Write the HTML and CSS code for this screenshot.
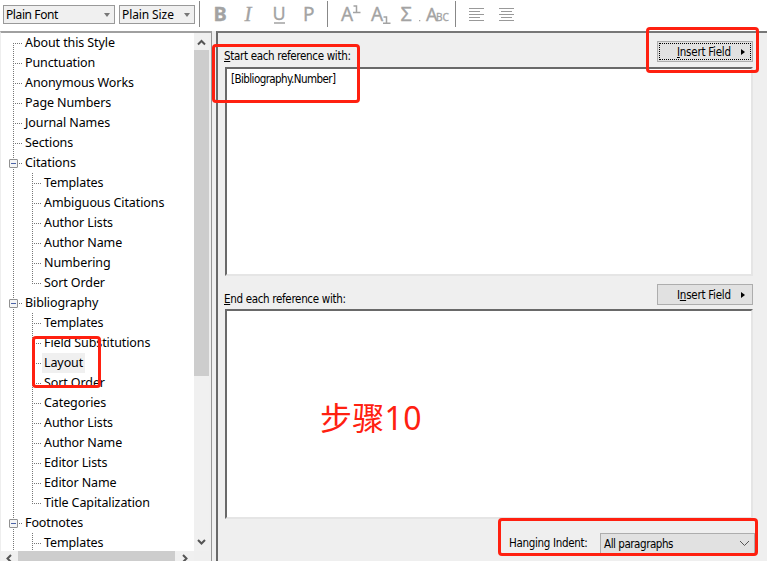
FILE: index.html
```html
<!DOCTYPE html>
<html lang="en">
<head>
<meta charset="utf-8">
<title>Style editor</title>
<link rel="stylesheet" href="styles.css">
</head>
<body>
<header class="toolbar">
  <div class="combo font">Plain Font<i class="down"></i></div>
  <div class="combo size">Plain Size<i class="down"></i></div>
  <svg class="tools" width="330" height="31" viewBox="196 0 330 31">
    <path class="sep" d="M199.5 1V27M327.5 1V27M455.5 1V27"/>
    <g class="glyphs">
      <text x="213.500" y="21" font-size="20" font-weight="700" textLength="13">B</text>
      <text x="244.500" y="21" class="serif">I</text>
      <text x="272.500" y="20" font-size="18" textLength="13">U</text>
      <text x="303" y="21" font-size="19">P</text>
      <text x="341" y="21" font-size="19">A</text>
      <text x="371" y="21" font-size="19">A</text>
      <text x="400.500" y="21" font-size="20" textLength="13">Σ</text>
      <text x="426" y="21" font-size="18" textLength="11">A</text>
      <text x="436" y="21" font-size="10.500" textLength="13" lengthAdjust="spacingAndGlyphs">BC</text>
    </g>
    <path class="stroke" d="M274 23h11M353.500 6h3v6M353 12.500h7.500M383.500 17h3v6M383 23.200h7.500"/>
    <path class="dot" d="M419 20h1.300v1.300h-1.300z"/>
    <path class="lines" d="M469 8.500h15M469 11.500h11M469 14.500h15M469 17.500h11M469 20.500h15M499 8.500h15M501 11.500h11M499 14.500h15M501 17.500h11M499 20.500h15"/>
  </svg>
</header>
<main class="main">
  <aside class="side">
    <div class="upper">
      <ul class="tree">
        <li class="row first"><span>About this Style</span></li>
        <li class="row"><span>Punctuation</span></li>
        <li class="row"><span>Anonymous Works</span></li>
        <li class="row"><span>Page Numbers</span></li>
        <li class="row"><span>Journal Names</span></li>
        <li class="row"><span>Sections</span></li>
        <li class="row group"><i class="toggle"></i><span>Citations</span></li>
        <li class="row child"><span>Templates</span></li>
        <li class="row child"><span>Ambiguous Citations</span></li>
        <li class="row child"><span>Author Lists</span></li>
        <li class="row child"><span>Author Name</span></li>
        <li class="row child"><span>Numbering</span></li>
        <li class="row child last"><span>Sort Order</span></li>
        <li class="row group"><i class="toggle"></i><span>Bibliography</span></li>
        <li class="row child"><span>Templates</span></li>
        <li class="row child"><span>Field Substitutions</span></li>
        <li class="row child"><span class="selected">Layout</span></li>
        <li class="row child"><span>Sort Order</span></li>
        <li class="row child"><span>Categories</span></li>
        <li class="row child"><span>Author Lists</span></li>
        <li class="row child"><span>Author Name</span></li>
        <li class="row child"><span>Editor Lists</span></li>
        <li class="row child"><span>Editor Name</span></li>
        <li class="row child last"><span>Title Capitalization</span></li>
        <li class="row group"><i class="toggle"></i><span>Footnotes</span></li>
        <li class="row child"><span>Templates</span></li>
      </ul>
      <div class="vscroll">
        <svg width="15" height="17"><path class="chev" d="M4 11.500l3.500-3.500 3.500 3.500"/></svg>
        <div class="vthumb"></div>
        <svg width="15" height="17"><path class="chev" d="M4 6l3.500 3.500L11 6"/></svg>
      </div>
    </div>
    <div class="hscroll">
      <svg width="17" height="10"><path class="chev" d="M10 4L6.500 7.500 10 11"/></svg>
      <div class="hthumb"></div>
      <svg width="19" height="10"><path class="chev" d="M8 4l3.500 3.500L8 11"/></svg>
    </div>
  </aside>
  <section class="pane">
    <div class="head one">
      <label><u>S</u>tart each reference with:</label>
      <button class="insert focus"><span><u>I</u>nsert Field</span><i class="right"></i></button>
    </div>
    <div class="field"><span class="value">[Bibliography.Number]</span></div>
    <div class="head two">
      <label><u>E</u>nd each reference with:</label>
      <button class="insert"><span>I<u>n</u>sert Field</span><i class="right"></i></button>
    </div>
    <div class="field second"></div>
    <div class="indent">
      <label class="hang">Hanging Indent:</label>
      <div class="select"><span>All paragraphs</span><svg width="11" height="7"><path d="M1 1l4.500 4.500L10 1"/></svg></div>
    </div>
  </section>
</main>
<div class="mark m1"></div>
<div class="mark m2"></div>
<div class="mark m3"></div>
<div class="mark m4"></div>
<div class="note">步骤10</div>
</body>
</html>
```
FILE: styles.css
```css
* { box-sizing: border-box; }
body {
  margin: 0;
  width: 767px;
  height: 561px;
  overflow: hidden;
  position: relative;
  display: flex;
  flex-direction: column;
  background: #efefef;
  color: #000;
  font: 12px "Noto Sans", sans-serif;
}
.toolbar {
  height: 31px;
  flex: none;
  background: #fff;
  display: flex;
  padding-left: 3px;
}
.combo {
  height: 19px;
  margin-top: 5px;
  border: 1px solid #999;
  background: #f0f0f0;
  display: flex;
  align-items: center;
  justify-content: space-between;
  padding: 0 4px 0 2px;
  white-space: nowrap;
}
.font { width: 112px; letter-spacing: -0.4px; }
.size { width: 76px; margin-left: 4px; letter-spacing: -0.1px; }
.down {
  border: 3px solid transparent;
  border-top: 4px solid #777;
  border-bottom: 0;
}
.tools { margin-left: 1px; }
.tools path { fill: none; }
.sep { stroke: #888; }
.glyphs { fill: #a3a3a3; stroke: #a3a3a3; stroke-width: 0.3; font-family: "Noto Sans", sans-serif; }
.glyphs .serif { font: italic 21px "Liberation Serif", serif; }
.tools .stroke { stroke: #a3a3a3; stroke-width: 1.5; }
.tools .dot { fill: #a3a3a3; }
.lines { stroke: #999; }

.main { flex: 1; display: flex; min-height: 0; }
.side {
  width: 212px;
  flex: none;
  border-top: 2px solid #a0a0a0;
  border-right: 1px solid #969696;
  border-left: 1px solid #eee;
  display: flex;
  flex-direction: column;
  background: #efefef;
}
.upper { height: 518px; display: flex; overflow: hidden; }
.tree {
  margin: 0;
  padding: 0;
  width: 193px;
  height: 518px;
  overflow: hidden;
  list-style: none;
  background: #fff;
  font-size: 12.5px;
  letter-spacing: -0.1px;
}
.row {
  height: 20px;
  display: flex;
  align-items: center;
  padding-left: 22px;
  white-space: nowrap;
  background:
    repeating-linear-gradient(#777 0 1px, transparent 1px 2px) 12px 0 / 1px 20px no-repeat,
    repeating-linear-gradient(90deg, #777 0 1px, transparent 1px 2px) 12px 10px / 9px 1px no-repeat;
}
.row span { padding: 0 2px; line-height: 19px; height: 20px; }
.first { background-position: 12px 10px, 12px 10px; }
.child {
  padding-left: 41px;
  background:
    repeating-linear-gradient(#777 0 1px, transparent 1px 2px) 12px 0 / 1px 20px no-repeat,
    repeating-linear-gradient(#777 0 1px, transparent 1px 2px) 31px 0 / 1px 20px no-repeat,
    repeating-linear-gradient(90deg, #777 0 1px, transparent 1px 2px) 31px 10px / 9px 1px no-repeat;
}
.last { background-size: 1px 20px, 1px 10px, 9px 1px; }
.group { padding-left: 8px; }
.toggle {
  width: 9px;
  height: 9px;
  margin-right: 5px;
  border: 1px solid #919191;
  border-radius: 1px;
  background: linear-gradient(#4b63a7, #4b63a7) center / 5px 1px no-repeat #f5f5f5;
}
.row .selected { background: #f0f0f0; }
.vscroll { width: 15px; display: flex; flex-direction: column; background: #f0f0f0; }
.vthumb { height: 326px; background: #cdcdcd; margin-bottom: 158px; }
.chev { fill: none; stroke: #555; stroke-width: 2; }
.hscroll { height: 10px; width: 193px; display: flex; background: #f0f0f0; }
.hthumb { width: 157px; background: #cdcdcd; }

.pane {
  flex: 1;
  margin-left: 4px;
  border-left: 2px solid #696969;
  border-top: 2px solid #777;
  padding-left: 6px;
  font-family: "DejaVu Sans Condensed", "DejaVu Sans", sans-serif;
  font-stretch: condensed;
  font-size: 11.5px;
  letter-spacing: -0.32px;
}
.head { width: 529px; display: flex; justify-content: space-between; }
.one { height: 34px; padding-top: 8px; }
.two { height: 33px; padding-top: 8px; }
.head label { margin-top: 7px; line-height: 17px; }
.insert {
  width: 96px;
  height: 21px;
  padding: 0 7px 0 19px;
  border: 1px solid #adadad;
  background: #e1e1e1;
  color: #000;
  font: inherit;
  letter-spacing: -0.25px;
  display: flex;
  align-items: center;
  justify-content: space-between;
  white-space: nowrap;
}
.focus { outline: 1px dotted #000; outline-offset: -3px; }
u { text-underline-offset: 1px; }
.right {
  border: 3px solid transparent;
  border-left: 4px solid #000;
  border-right: 0;
}
.field {
  margin-left: 1px;
  width: 528px;
  height: 209px;
  background: #fff;
  border: 2px solid #696969;
  border-right: 2px solid #e5e5e5;
  border-bottom: 2px solid #e5e5e5;
  padding: 2px 4px;
}
.value { display: block; line-height: 17px; letter-spacing: -0.57px; }
.second { height: 210px; }
.indent { display: flex; margin: 14px 0 0 285px; }
.hang { width: 91px; line-height: 21px; }
.select {
  width: 155px;
  height: 21px;
  background: #e1e1e1;
  border: 1px solid #adadad;
  padding: 0 4px 0 3px;
  display: flex;
  justify-content: space-between;
  align-items: center;
  letter-spacing: -0.45px;
}
.select path { fill: none; stroke: #555; }
.mark { position: absolute; border: 3px solid #ff2010; border-radius: 4px; }
.m1 { left: 212px; top: 44px; width: 148px; height: 59px; }
.m2 { left: 646px; top: 27px; width: 113px; height: 46px; }
.m3 { left: 32px; top: 336px; width: 69px; height: 52px; }
.m4 { left: 498px; top: 518px; width: 260px; height: 38px; }
.note {
  position: absolute;
  left: 320px;
  top: 394px;
  color: #ff2010;
  font: 32px/48px "Noto Sans", "Noto Sans CJK SC", sans-serif;
  letter-spacing: 0.3px;
  white-space: nowrap;
}
```
